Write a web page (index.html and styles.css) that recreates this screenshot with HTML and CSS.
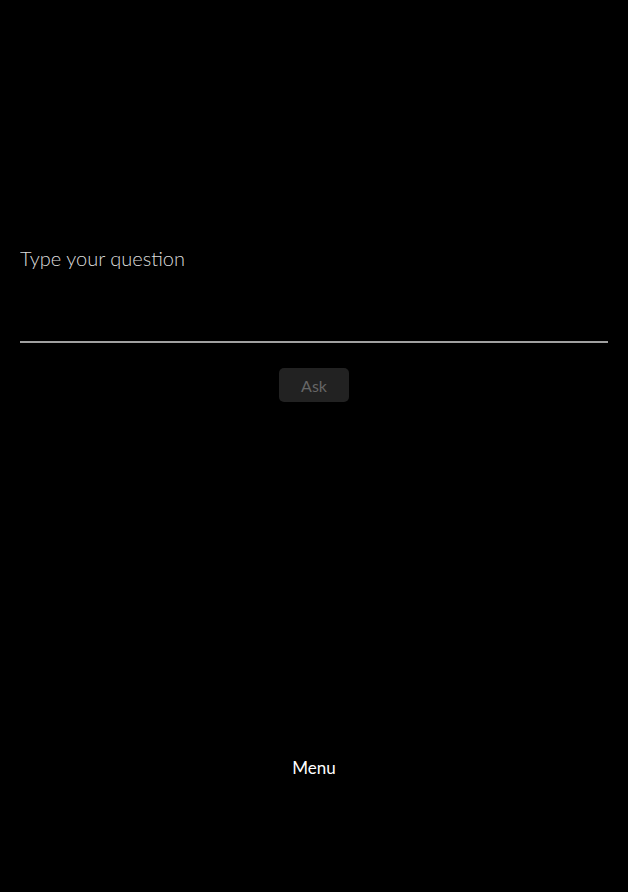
FILE: index.html
```html
<!DOCTYPE html>
<html>
<head>
<meta charset="utf-8">
<link rel="stylesheet" href="styles.css">
</head>
<body>
<main class="page">
  <section class="ask">
    <textarea class="question" placeholder="Type your question"></textarea>
    <button class="ask-btn">Ask</button>
  </section>
  <nav class="menu">Menu</nav>
</main>
</body>
</html>
```
FILE: styles.css
```css
html, body {
  margin: 0;
  padding: 0;
  background: #000;
  height: 100%;
}
.page {
  height: 892px;
  display: flex;
  flex-direction: column;
  font-family: Lato, "Open Sans", sans-serif;
}
.ask {
  padding: 245px 20px 0;
  display: flex;
  flex-direction: column;
  align-items: center;
}
.question {
  box-sizing: border-box;
  width: 100%;
  height: 98px;
  background: transparent;
  border: none;
  border-bottom: 2px solid #a0a0a0;
  color: #ddd;
  font-family: Lato, sans-serif;
  font-weight: 300;
  font-size: 20px;
  padding: 1px 0 0 0;
  resize: none;
  outline: none;
}
.question::placeholder {
  color: #dcdcdc;
}
.ask-btn {
  margin-top: 25px;
  width: 70px;
  height: 34px;
  background: #222;
  border: none;
  border-radius: 5px;
  color: #666;
  font-family: Lato, sans-serif;
  font-size: 16px;
  font-weight: 400;
}
.menu {
  margin-top: 355px;
  text-align: center;
  color: #fff;
  font-size: 17px;
  font-weight: 400;
}
```
